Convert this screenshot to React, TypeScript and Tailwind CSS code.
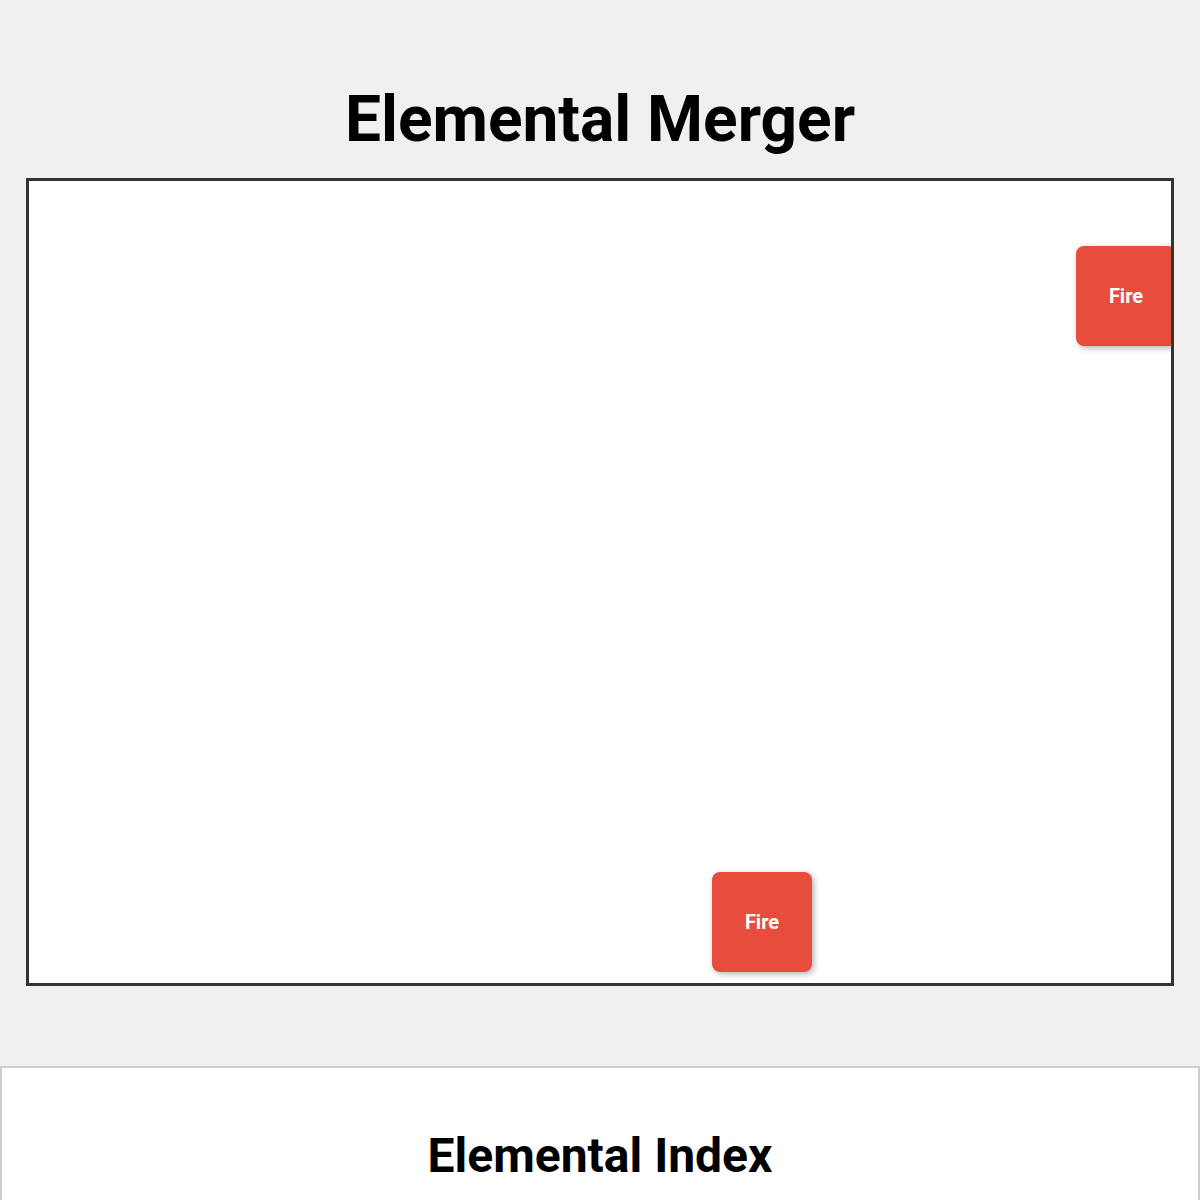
import React from 'react'

type Tile = { id: number; name: string; x: number; y: number }

const tiles: Tile[] = [
  { id: 1, name: 'Fire', x: 1047, y: 65 },
  { id: 2, name: 'Fire', x: 683, y: 691 },
]

const App = () => {
  return (
    <div className="min-h-screen bg-[#f0f0f0] font-['Roboto',sans-serif] text-black">
      <div className="flex flex-col items-center pt-[88px]">
        <h1 className="text-[64px] font-bold leading-[1] mb-[26px]">Elemental Merger</h1>
        <div className="relative w-[1148px] h-[808px] bg-white border-[3px] border-[#333] overflow-hidden">
          {tiles.map((t) => (
            <div
              key={t.id}
              className="absolute w-[100px] h-[100px] rounded-[8px] bg-[#e74c3c] text-white font-bold text-[20px] flex items-center justify-center shadow-[2px_2px_6px_rgba(0,0,0,0.3)]"
              style={{ left: t.x, top: t.y }}
            >
              {t.name}
            </div>
          ))}
        </div>
      </div>
      <div className="mt-[80px] bg-white border-2 border-[#ccc] pt-[64px] pb-10">
        <h2 className="text-center text-[48px] font-bold leading-[1]">Elemental Index</h2>
      </div>
    </div>
  )
}

export default App
